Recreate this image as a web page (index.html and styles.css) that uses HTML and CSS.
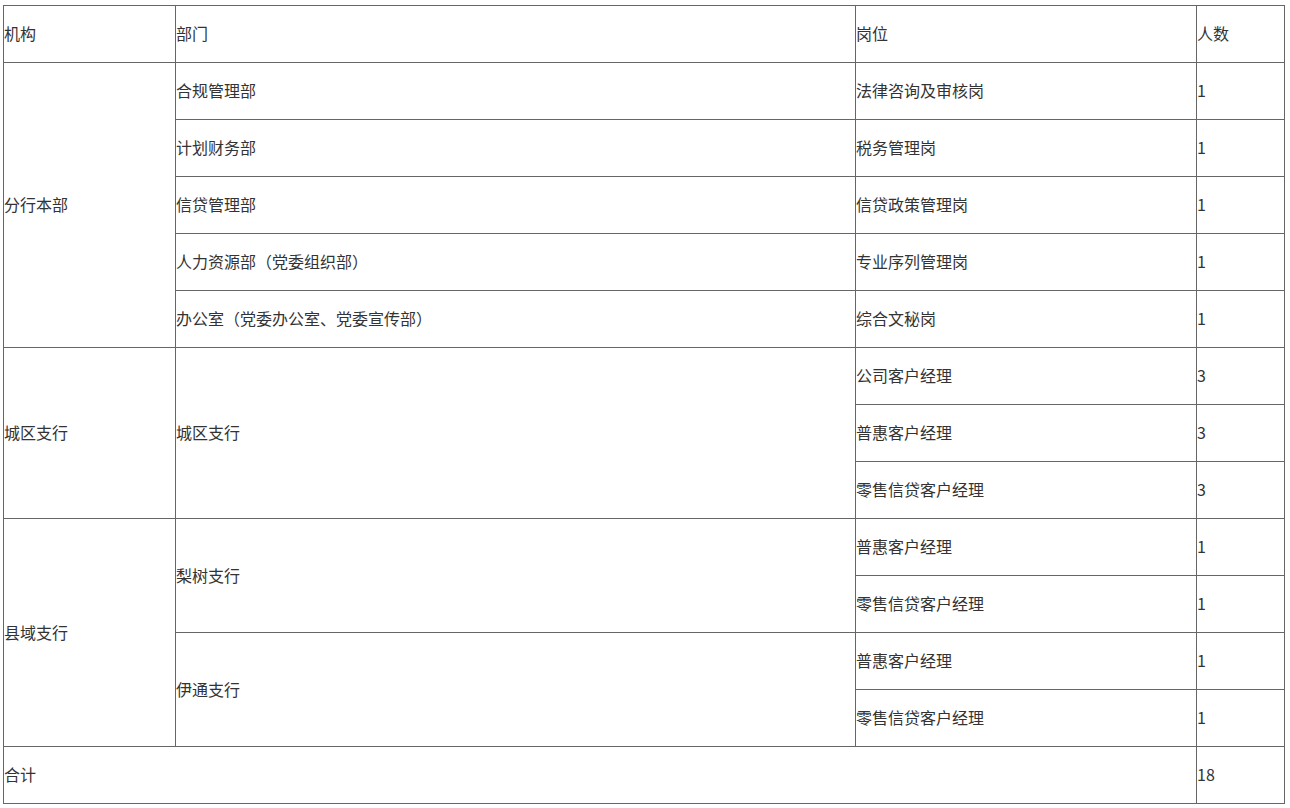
FILE: index.html
```html
<!DOCTYPE html>
<html lang="zh">
<head>
<meta charset="utf-8">
<title>岗位表</title>
<link rel="stylesheet" href="styles.css">
</head>
<body>
<table class="jobs">
  <colgroup>
    <col class="c1"><col class="c2"><col class="c3"><col class="c4">
  </colgroup>
  <tbody>
    <tr><td>机构</td><td>部门</td><td>岗位</td><td>人数</td></tr>
    <tr><td rowspan="5">分行本部</td><td>合规管理部</td><td>法律咨询及审核岗</td><td>1</td></tr>
    <tr><td>计划财务部</td><td>税务管理岗</td><td>1</td></tr>
    <tr><td>信贷管理部</td><td>信贷政策管理岗</td><td>1</td></tr>
    <tr><td>人力资源部（党委组织部）</td><td>专业序列管理岗</td><td>1</td></tr>
    <tr><td>办公室（党委办公室、党委宣传部）</td><td>综合文秘岗</td><td>1</td></tr>
    <tr><td rowspan="3">城区支行</td><td rowspan="3">城区支行</td><td>公司客户经理</td><td>3</td></tr>
    <tr><td>普惠客户经理</td><td>3</td></tr>
    <tr><td>零售信贷客户经理</td><td>3</td></tr>
    <tr><td rowspan="4">县域支行</td><td rowspan="2">梨树支行</td><td>普惠客户经理</td><td>1</td></tr>
    <tr><td>零售信贷客户经理</td><td>1</td></tr>
    <tr><td rowspan="2">伊通支行</td><td>普惠客户经理</td><td>1</td></tr>
    <tr><td>零售信贷客户经理</td><td>1</td></tr>
    <tr><td colspan="3">合计</td><td>18</td></tr>
  </tbody>
</table>
</body>
</html>
```
FILE: styles.css
```css
html, body {
  margin: 0;
  padding: 0;
  background: #ffffff;
}
body {
  font-family: "Noto Sans CJK SC", "Noto Sans", sans-serif;
  font-size: 16px;
  color: #333333;
}
.jobs {
  margin: 5px 0 0 3px;
  width: 1281px;
  table-layout: fixed;
  border-collapse: collapse;
}
.jobs .c1 { width: 172px; }
.jobs .c2 { width: 680px; }
.jobs .c3 { width: 341px; }
.jobs .c4 { width: 88px; }
.jobs tr {
  height: 57px;
}
.jobs td {
  border: 1px solid #666666;
  padding: 0 0 2px 0;
  text-align: left;
  vertical-align: middle;
  line-height: 24px;
  white-space: nowrap;
}
```
